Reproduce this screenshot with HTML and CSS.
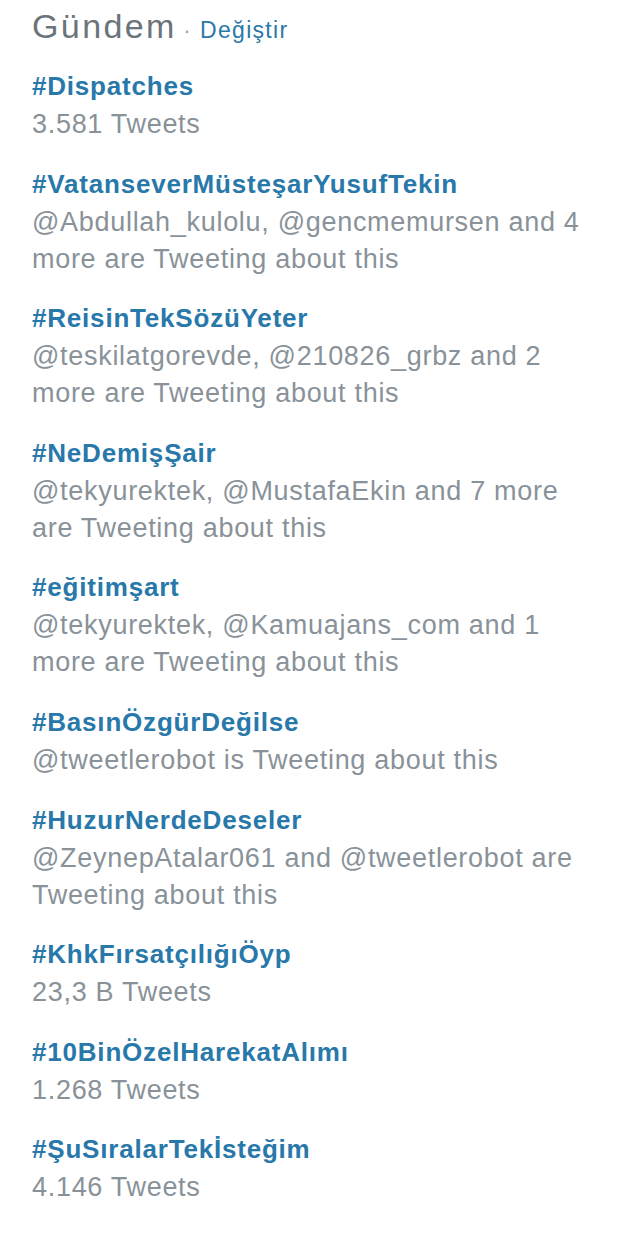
FILE: index.html
```html
<!DOCTYPE html>
<html lang="tr">
<head>
<meta charset="utf-8">
<title>Gündem</title>
<link rel="stylesheet" href="styles.css">
</head>
<body>
<div class="trends">
  <div class="header">
    <span class="title">Gündem</span>
    <span class="sep">·</span>
    <a class="change">Değiştir</a>
  </div>
  <ul class="list">
    <li class="item"><a class="tag">#Dispatches</a><div class="desc">3.581 Tweets</div></li>
    <li class="item"><a class="tag">#VatanseverMüsteşarYusufTekin</a><div class="desc">@Abdullah_kulolu, @gencmemursen and 4<br>more are Tweeting about this</div></li>
    <li class="item"><a class="tag">#ReisinTekSözüYeter</a><div class="desc">@teskilatgorevde, @210826_grbz and 2<br>more are Tweeting about this</div></li>
    <li class="item"><a class="tag">#NeDemişŞair</a><div class="desc">@tekyurektek, @MustafaEkin and 7 more<br>are Tweeting about this</div></li>
    <li class="item"><a class="tag">#eğitimşart</a><div class="desc">@tekyurektek, @Kamuajans_com and 1<br>more are Tweeting about this</div></li>
    <li class="item"><a class="tag">#BasınÖzgürDeğilse</a><div class="desc">@tweetlerobot is Tweeting about this</div></li>
    <li class="item"><a class="tag">#HuzurNerdeDeseler</a><div class="desc">@ZeynepAtalar061 and @tweetlerobot are<br>Tweeting about this</div></li>
    <li class="item"><a class="tag">#KhkFırsatçılığıÖyp</a><div class="desc">23,3 B Tweets</div></li>
    <li class="item"><a class="tag">#10BinÖzelHarekatAlımı</a><div class="desc">1.268 Tweets</div></li>
    <li class="item"><a class="tag">#ŞuSıralarTekİsteğim</a><div class="desc">4.146 Tweets</div></li>
  </ul>
</div>
</body>
</html>
```

FILE: styles.css
```css
html, body {
  margin: 0;
  padding: 0;
  background: #ffffff;
}

body {
  font-family: "Liberation Sans", Arial, sans-serif;
}

.trends {
  padding: 6px 0 0 32px;
}

.header {
  line-height: 40px;
  white-space: nowrap;
  margin-bottom: 14px;
}

.title {
  font-size: 34px;
  color: #6b747a;
  letter-spacing: 2.4px;
}

.sep {
  font-size: 22px;
  color: #9aa2a8;
  margin: 0 5px 0 2px;
}

.change {
  font-size: 23px;
  color: #2b78a8;
  letter-spacing: 1.3px;
}

.list {
  list-style: none;
  margin: 0;
  padding: 0;
}

.item {
  margin-bottom: 21.6px;
}

.tag {
  display: block;
  font-size: 26px;
  font-weight: bold;
  line-height: 39px;
  color: #2878aa;
  letter-spacing: 0.8px;
  white-space: nowrap;
}

.desc {
  font-size: 27px;
  line-height: 37px;
  color: #899299;
  letter-spacing: 0.7px;
  white-space: nowrap;
}
```
